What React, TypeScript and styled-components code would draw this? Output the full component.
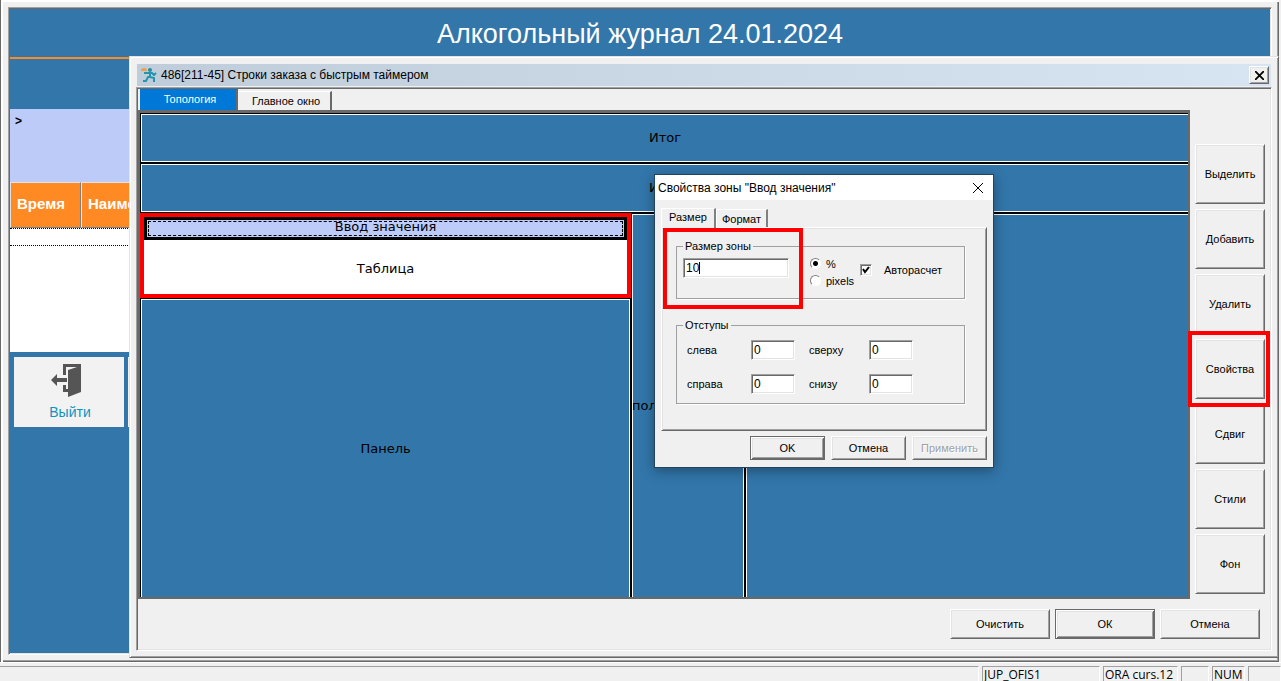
import React from "react";
import styled, { createGlobalStyle, css } from "styled-components";

const ui = `"Liberation Sans", Arial, sans-serif`;
const sans = `"Liberation Sans", Arial, sans-serif`;
const wide = `"DejaVu Sans", Verdana, sans-serif`;

const Global = createGlobalStyle`
  *, *::before, *::after { box-sizing: border-box; }
  html, body { margin: 0; height: 100%; }
  body { background: #f0f0f0; color: #000; font: 11px/14px ${sans}; overflow: hidden; }
  button, input { font: inherit; color: inherit; margin: 0; }
`;

const raised = css`
  border: 1px solid;
  border-color: #fff #696969 #696969 #fff;
  box-shadow: inset 1px 1px 0 #e3e3e3, inset -1px -1px 0 #a0a0a0;
`;
const sunken = css`
  border: 1px solid;
  border-color: #a0a0a0 #fff #fff #a0a0a0;
  box-shadow: inset 1px 1px 0 #696969, inset -1px -1px 0 #e3e3e3;
`;

const Desktop = styled.div`
  position: relative;
  display: flex;
  flex-direction: column;
  height: 100vh;
  min-height: 600px;
`;

/* journal window */
const Journal = styled.main`
  flex: 1;
  display: flex;
  margin-right: 2px;
  padding: 7px 7px 7px 6px;
  border-left: 1px solid #696969;
  box-shadow: inset 2px 2px 0 #fff, inset -1px -1px 0 #696969, inset -2px -2px 0 #a0a0a0;
`;
const JournalBody = styled.div`
  ${sunken}
  flex: 1;
  display: flex;
  flex-direction: column;
  padding: 1px;
  background: #3276aa;
  margin-left: 1px;
`;
const JournalTitle = styled.h1`
  margin: 0;
  height: 50px;
  border-bottom: 2px solid #ff8a24;
  color: #fff;
  font: 27px/50px ${sans};
  text-align: center;
`;
const Filter = styled.div`
  height: 73px;
  margin-top: 50px;
  padding: 5px;
  background: #bdcbf9;
  font: bold 12px/14px ${sans};
`;
const Grid = styled.table`
  width: 100%;
  border-collapse: separate;
  border-spacing: 0;
  table-layout: fixed;
  color: #fff;
  font: bold 15px/18px ${sans};
`;
const HeadCell = styled.th<{ $w?: number }>`
  width: ${(p) => (p.$w ? `${p.$w}px` : "auto")};
  height: 46px;
  padding: 0 6px 2px;
  background: #ff8a24;
  border: 1px solid;
  border-color: #e3e3e3 #808080 #808080 #e3e3e3;
  text-align: left;
`;
const GridSpace = styled.div`
  height: 124px;
  background: #fff;
  border-top: 1px dotted #000;
  &::before {
    content: "";
    display: block;
    height: 17px;
    border-bottom: 1px dotted #000;
  }
`;
const Actions = styled.div`
  display: flex;
  gap: 4px;
  padding: 5px 4px;
`;
const ActionButton = styled.button`
  width: 110px;
  height: 70px;
  padding: 7px 0 0 2px;
  display: flex;
  flex-direction: column;
  align-items: center;
  gap: 6px;
  border: 0;
  background: #f2f2f2;
  color: #0f93bd;
  font: 14px/18px ${sans};
  svg { display: block; margin-right: 8px; }
`;

/* layout editor window */
const Editor = styled.section`
  position: absolute;
  inset: 56px 2px 23px 129px;
  display: flex;
  flex-direction: column;
  padding: 7px 6px 6px;
  background: #f0f0f0;
  border: 1px solid;
  border-color: #e3e3e3 #696969 #696969 #e3e3e3;
  box-shadow: inset 1px 1px 0 #fff, inset -1px -1px 0 #a0a0a0;
`;
const EditorTitle = styled.header`
  display: flex;
  align-items: center;
  gap: 4px;
  height: 22px;
  margin: 0 1px 1px;
  padding: 0 2px 0 4px;
  background: linear-gradient(90deg, #bfcddb, #d7e4f2);
  font: 12px/16px ${ui};
  h2 { margin: 0; flex: 1; font: inherit; }
`;
const SmallClose = styled.button`
  ${raised}
  width: 20px;
  height: 18px;
  padding: 0;
  display: grid;
  place-items: center;
  background: #f0f0f0;
`;
const EditorBody = styled.div`
  ${sunken}
  flex: 1;
  display: flex;
  flex-direction: column;
  justify-content: space-between;
  padding: 1px 6px 11px 1px;
`;
const EditorMain = styled.div`
  display: flex;
  gap: 5px;
`;
const Work = styled.div`
  flex: 1;
  min-width: 0;
`;
const TabRow = styled.div`
  display: flex;
  align-items: flex-end;
  height: 21px;
`;
const EditorTab = styled.button<{ $active?: boolean }>`
  height: ${(p) => (p.$active ? 21 : 19)}px;
  width: ${(p) => (p.$active ? 98 : 94)}px;
  margin-left: ${(p) => (p.$active ? 2 : 0)}px;
  padding: 0 0 ${(p) => (p.$active ? 2 : 0)}px 4px;
  border: 0;
  border-right: 2px solid #696969;
  border-top: 1px solid ${(p) => (p.$active ? "#0078d7" : "#fff")};
  background: ${(p) => (p.$active ? "#0078d7" : "#f0f0f0")};
  color: ${(p) => (p.$active ? "#fff" : "#000")};
`;
const Canvas = styled.div`
  height: 489px;
  border: 2px solid #696969;
  border-top-width: 3px;
  display: flex;
  flex-direction: column;
  overflow: hidden;
  background: #3276aa;
  font: 13px/16px ${wide};
`;
const CanvasSurface = styled.div`
  flex: 1;
  display: flex;
  flex-direction: column;
  margin-right: -2px;
`;
const Zone = styled.div<{ $h?: number; $w?: number; $start?: boolean }>`
  display: flex;
  align-items: center;
  justify-content: ${(p) => (p.$start ? "flex-start" : "center")};
  overflow: hidden;
  flex: ${(p) => (p.$h || p.$w ? "none" : "1")};
  ${(p) => p.$h && `height: ${p.$h}px;`}
  ${(p) => p.$w && `width: ${p.$w}px;`}
  border: 1px solid #000;
  box-shadow: inset 0 0 0 1px #fff;
`;
const ZoneRow = styled.div`
  flex: 1;
  display: flex;
  margin-bottom: -2px;
`;
const ZoneColumn = styled.div`
  width: 491px;
  display: flex;
  flex-direction: column;
`;
const Marked = styled.div`
  height: 85px;
  display: flex;
  flex-direction: column;
  border: 4px solid #f00;
  background: #fff;
`;
const SelectedZone = styled.div`
  height: 23px;
  border: 3px solid #000;
  background: #bdcbf9;
  padding: 1px;
  div {
    border: 1px dashed #000;
    height: 15px;
    line-height: 10px;
    text-align: center;
  }
`;
const TableZone = styled.div`
  flex: 1;
  display: grid;
  place-items: center;
  padding-top: 3px;
`;
const Tools = styled.div`
  display: flex;
  flex-direction: column;
  gap: 5px;
  padding-top: 55px;
`;
const PushButton = styled.button<{ $w: number; $h: number; $default?: boolean }>`
  ${raised}
  position: relative;
  width: ${(p) => p.$w}px;
  height: ${(p) => p.$h}px;
  padding: 0;
  background: #f0f0f0;
  ${(p) =>
    p.$default &&
    css`
      border-color: #696969;
      box-shadow: inset 1px 1px 0 #fff, inset -1px -1px 0 #696969, inset 2px 2px 0 #e3e3e3, inset -2px -2px 0 #a0a0a0;
    `}
  &:disabled { color: #a0a0a0; text-shadow: 1px 1px 0 #fff; }
`;
const ToolSlot = styled.div<{ $marked?: boolean }>`
  position: relative;
  height: 60px;
  ${(p) =>
    p.$marked &&
    css`
      z-index: 1;
      &::after {
        content: "";
        position: absolute;
        inset: -8px -5px -8px -7px;
        border: 4px solid #f00;
        pointer-events: none;
      }
    `}
`;
const EditorFooter = styled.footer`
  display: flex;
  justify-content: flex-end;
  gap: 5px;
  padding-right: 5px;
`;

/* zone properties dialog */
const Props = styled.section`
  position: absolute;
  left: 654px;
  top: 174px;
  width: 340px;
  height: 294px;
  background: #f0f0f0;
  border: 1px solid #24435d;
  box-shadow: 0 3px 12px rgba(0, 0, 0, 0.35);
  font: 11px/14px ${sans};
`;
const PropsTitle = styled.header`
  display: flex;
  align-items: center;
  justify-content: space-between;
  height: 25px;
  padding: 0 4px 0 3px;
  background: #fff;
  font: 12px/16px ${ui};
  h2 { margin: 0; font: inherit; }
`;
const CloseButton = styled.button`
  width: 22px;
  height: 22px;
  padding: 0;
  border: 0;
  background: none;
  display: grid;
  place-items: center;
`;
const PropsBody = styled.div`
  padding: 8px 6px;
`;
const SheetTabs = styled.div`
  display: flex;
  align-items: flex-end;
  height: 19px;
`;
const SheetTab = styled.button<{ $active?: boolean }>`
  position: relative;
  width: ${(p) => (p.$active ? 55 : 52)}px;
  height: ${(p) => (p.$active ? 20 : 18)}px;
  margin-bottom: ${(p) => (p.$active ? -1 : 0)}px;
  padding: 0 0 ${(p) => (p.$active ? 3 : 0)}px;
  border: 0;
  border-left: 1px solid #fff;
  border-top: 1px solid #fff;
  border-right: 2px solid #808080;
  background: #f0f0f0;
`;
const Sheet = styled.div`
  ${raised}
  height: 204px;
  padding: 11px 21px 0 14px;
`;
const Group = styled.fieldset<{ $h: number }>`
  height: ${(p) => p.$h}px;
  margin: 0 0 19px;
  padding: 0 6px;
  border: 1px solid #a0a0a0;
  box-shadow: 1px 1px 0 #fff;
  legend { padding: 0 2px; }
`;
const SizeRow = styled.div`
  display: flex;
  align-items: flex-start;
  padding-top: 5px;
`;
const TextBox = styled.input<{ $w: number }>`
  ${sunken}
  width: ${(p) => p.$w}px;
  height: 20px;
  padding: 0 2px;
  background: #fff;
  font: 12px/16px ${ui};
  outline: 0;
`;
const Focused = styled.div`
  position: relative;
  height: 20px;
  &::after {
    content: "";
    position: absolute;
    left: 16px;
    top: 4px;
    width: 1px;
    height: 12px;
    background: #000;
  }
`;
const Radios = styled.div`
  display: flex;
  flex-direction: column;
  gap: 2px;
  margin: -2px 0 0 21px;
  width: 50px;
  label { display: flex; align-items: center; gap: 5px; height: 15px; }
`;
const Radio = styled.input`
  appearance: none;
  width: 11px;
  height: 11px;
  border: 1px solid;
  border-color: #808080 #fff #fff #808080;
  border-radius: 50%;
  background: #fff;
  &:checked { background: radial-gradient(#000 2px, #fff 3px); }
`;
const CheckLabel = styled.label`
  display: flex;
  align-items: center;
  gap: 12px;
  height: 24px;
`;
const CheckWrap = styled.span`
  display: grid;
  width: 12px;
  height: 12px;
  > * { grid-area: 1 / 1; }
`;
const Check = styled.input`
  ${sunken}
  appearance: none;
  width: 12px;
  height: 12px;
  background: #fff;
`;
const Margins = styled.div`
  display: grid;
  grid-template-columns: 64px 58px 60px 44px;
  gap: 14px 0;
  align-items: center;
  padding: 8px 0 0 4px;
`;
const PropsButtons = styled.div`
  display: flex;
  justify-content: flex-end;
  gap: 6px;
  padding-top: 5px;
`;
const Highlight = styled.div`
  position: absolute;
  left: 8px;
  top: 53px;
  width: 140px;
  height: 81px;
  border: 4px solid #f00;
  pointer-events: none;
`;

/* status bar */
const StatusBar = styled.footer`
  display: flex;
  gap: 3px;
  height: 19px;
  padding-top: 4px;
  box-shadow: inset 0 1px 0 #fff;
  font: 12px/16px "Open Sans", "Noto Sans", sans-serif;
`;
const StatusCell = styled.div<{ $w?: number }>`
  ${(p) => (p.$w ? `width: ${p.$w}px;` : "flex: 1;")}
  height: 16px;
  padding-left: 1px;
  border: 1px solid;
  border-color: #a0a0a0 #fff transparent #a0a0a0;
  &:first-child { border-left: 0; }
`;

const ExitIcon = () => (
  <svg width="30" height="33" viewBox="0 0 30 33" fill="#555">
    <path d="M12 0h18v28l-13 5V6l9-3H15v8h-3zM12 21h3v4h2v3h-5z" />
    <path d="M0 16l6-6v4h10v4H6v4z" />
  </svg>
);
const RunnerIcon = () => (
  <svg width="16" height="16" viewBox="0 0 16 16" fill="none">
    <circle cx="9" cy="3" r="2" fill="#218fa6" />
    <path
      d="M3 6h8l2 2 2-2M9 6v5M9 10H7l-2 4H2M9 10l4 1v4"
      stroke="#2595ad"
      strokeWidth="2"
      strokeLinejoin="round"
    />
    <path d="M0 4a3 3 0 0 1 6 0z" fill="#f0a040" />
  </svg>
);
const Cross = ({ size, w }: { size: number; w: number }) => (
  <svg width={size} height={size} viewBox="0 0 10 10">
    <path d="M0 0l10 10M10 0L0 10" stroke="#000" strokeWidth={w} fill="none" />
  </svg>
);

const tools = ["Выделить", "Добавить", "Удалить", "Свойства", "Сдвиг", "Стили", "Фон"];
const margins = ["слева", "сверху", "справа", "снизу"];

export default function App() {
  return (
    <Desktop>
      <Global />
      <Journal>
        <JournalBody>
          <JournalTitle>Алкогольный журнал 24.01.2024</JournalTitle>
          <Filter>&gt;</Filter>
          <Grid>
            <thead>
              <tr>
                <HeadCell $w={71}>Время</HeadCell>
                <HeadCell>Наименование</HeadCell>
              </tr>
            </thead>
          </Grid>
          <GridSpace />
          <Actions>
            <ActionButton>
              <ExitIcon />
              Выйти
            </ActionButton>
            <ActionButton aria-label="Действие" />
          </Actions>
        </JournalBody>
      </Journal>
      <StatusBar>
        <StatusCell />
        <StatusCell $w={118}>JUP_OFIS1</StatusCell>
        <StatusCell $w={75}>ORA curs.12</StatusCell>
        <StatusCell $w={28} />
        <StatusCell $w={33}>NUM</StatusCell>
        <StatusCell $w={33} />
      </StatusBar>

      <Editor>
        <EditorTitle>
          <RunnerIcon />
          <h2>486[211-45] Строки заказа с быстрым таймером</h2>
          <SmallClose aria-label="Закрыть">
            <Cross size={9} w={2} />
          </SmallClose>
        </EditorTitle>
        <EditorBody>
          <EditorMain>
            <Work>
              <TabRow>
                <EditorTab $active>Топология</EditorTab>
                <EditorTab>Главное окно</EditorTab>
              </TabRow>
              <Canvas>
                <CanvasSurface>
                  <Zone $h={50}>Итог</Zone>
                  <Zone $h={50}>Итог</Zone>
                  <ZoneRow>
                    <ZoneColumn>
                      <Marked>
                        <SelectedZone>
                          <div>Ввод значения</div>
                        </SelectedZone>
                        <TableZone>Таблица</TableZone>
                      </Marked>
                      <Zone>Панель</Zone>
                    </ZoneColumn>
                    <Zone $w={114} $start>пол</Zone>
                    <Zone />
                  </ZoneRow>
                </CanvasSurface>
              </Canvas>
            </Work>
            <Tools>
              {tools.map((t) => (
                <ToolSlot key={t} $marked={t === "Свойства"}>
                  <PushButton $w={70} $h={60}>{t}</PushButton>
                </ToolSlot>
              ))}
            </Tools>
          </EditorMain>
          <EditorFooter>
            <PushButton $w={100} $h={30}>Очистить</PushButton>
            <PushButton $w={100} $h={30} $default>ОК</PushButton>
            <PushButton $w={100} $h={30}>Отмена</PushButton>
          </EditorFooter>
        </EditorBody>
      </Editor>

      <Props>
        <PropsTitle>
          <h2>Свойства зоны "Ввод значения"</h2>
          <CloseButton aria-label="Закрыть">
            <Cross size={10} w={1} />
          </CloseButton>
        </PropsTitle>
        <PropsBody>
          <SheetTabs>
            <SheetTab $active>Размер</SheetTab>
            <SheetTab>Формат</SheetTab>
          </SheetTabs>
          <Sheet>
            <Group $h={60}>
              <legend>Размер зоны</legend>
              <SizeRow>
                <Focused>
                  <TextBox $w={106} defaultValue="10" aria-label="Размер зоны" />
                </Focused>
                <Radios>
                  <label><Radio type="radio" name="unit" defaultChecked />%</label>
                  <label><Radio type="radio" name="unit" />pixels</label>
                </Radios>
                <CheckLabel>
                  <CheckWrap>
                    <Check type="checkbox" defaultChecked />
                    <svg width="12" height="12" viewBox="0 0 12 12">
                      <path d="M3 5l2 3 4-5" fill="none" stroke="#000" strokeWidth="2" />
                    </svg>
                  </CheckWrap>
                  Авторасчет
                </CheckLabel>
              </SizeRow>
            </Group>
            <Group $h={86}>
              <legend>Отступы</legend>
              <Margins>
                {margins.map((m) => (
                  <React.Fragment key={m}>
                    <label htmlFor={m}>{m}</label>
                    <TextBox id={m} $w={44} defaultValue="0" />
                  </React.Fragment>
                ))}
              </Margins>
            </Group>
          </Sheet>
          <PropsButtons>
            <PushButton $w={75} $h={24} $default>OK</PushButton>
            <PushButton $w={75} $h={24}>Отмена</PushButton>
            <PushButton $w={75} $h={24} disabled>Применить</PushButton>
          </PropsButtons>
        </PropsBody>
        <Highlight />
      </Props>
    </Desktop>
  );
}
